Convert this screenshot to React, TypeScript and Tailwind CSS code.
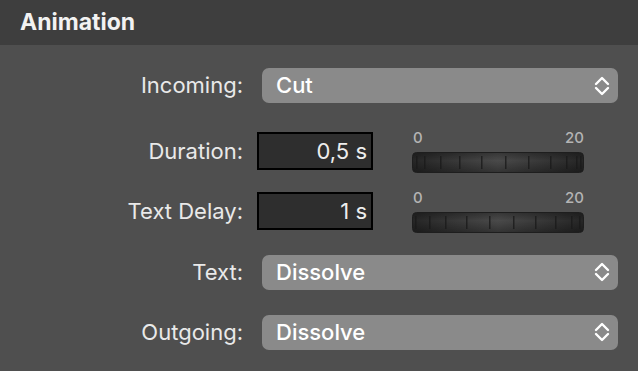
import type { ReactNode } from 'react'

const font = { fontFamily: 'Inter, "Liberation Sans", Arial, sans-serif' }

function Chevrons() {
  return (
    <svg width="16" height="20" viewBox="0 0 16 20" fill="none" stroke="white" strokeWidth="2.4" strokeLinecap="round" strokeLinejoin="round">
      <path d="M2 8 L8 2 L14 8" />
      <path d="M2 12 L8 18 L14 12" />
    </svg>
  )
}

function Popup({ value }: { value: string }) {
  return (
    <div className="ml-[19px] flex h-[35px] w-[356px] items-center justify-between rounded-[7px] bg-[#8a8a8a] pl-[14px] pr-[8px]">
      <span className="text-[22px] font-medium text-white">{value}</span>
      <Chevrons />
    </div>
  )
}

function Field({ value }: { value: string }) {
  return (
    <div className="ml-[14px] flex h-[38px] w-[116px] items-center justify-end border-2 border-black bg-[#2e2e2e] pr-[4px]">
      <span className="text-[22px] text-[#ededed]">{value}</span>
    </div>
  )
}

function Wheel({ ticks }: { ticks: number[] }) {
  return (
    <div className="ml-[39px] flex w-[172px] flex-col">
      <div className="flex h-[18px] justify-between pl-[1px] text-[15px] font-medium leading-[18px] text-[#b4b4b4]">
        <span>0</span>
        <span>20</span>
      </div>
      <svg className="mt-[5px]" width="172" height="21" viewBox="0 0 172 21">
        <defs>
          <linearGradient id="wheel" x1="0" x2="1" y1="0" y2="0">
            <stop offset="0" stopColor="#262626" />
            <stop offset="0.5" stopColor="#4a4a4a" />
            <stop offset="1" stopColor="#262626" />
          </linearGradient>
          <linearGradient id="shade" x1="0" x2="0" y1="0" y2="1">
            <stop offset="0" stopColor="#000" stopOpacity="0.25" />
            <stop offset="0.4" stopColor="#000" stopOpacity="0" />
            <stop offset="1" stopColor="#000" stopOpacity="0.3" />
          </linearGradient>
        </defs>
        <rect x="0.5" y="0.5" width="171" height="20" rx="4" fill="url(#wheel)" stroke="#1e1e1e" />
        <rect x="1" y="1" width="170" height="19" rx="4" fill="url(#shade)" />
        {ticks.map((t) => (
          <rect key={t} x={t} y="4" width="1.5" height="13" fill="#1a1a1a" opacity="0.8" />
        ))}
      </svg>
    </div>
  )
}

function Row({ label, mt, h, children }: { label: string; mt: string; h: string; children: ReactNode }) {
  return (
    <div className={`flex items-center ${mt} ${h}`}>
      <div className="w-[243px] text-right text-[22px] text-[#e9e9e9]">{label}</div>
      {children}
    </div>
  )
}

export default function App() {
  return (
    <div className="h-[371px] w-[638px] overflow-hidden bg-[#4f4f4f]" style={font}>
      <div className="flex h-[45px] items-center bg-[#3e3e3e] pl-[20px]">
        <h1 className="text-[23px] font-bold text-[#f2f2f2]">Animation</h1>
      </div>

      <Row label="Incoming:" mt="mt-[23px]" h="h-[35px]">
        <Popup value="Cut" />
      </Row>

      <Row label="Duration:" mt="mt-[25px]" h="h-[46px]">
        <Field value="0,5 s" />
        <Wheel ticks={[4, 12, 28, 47, 69, 93, 116, 138, 154, 164, 168]} />
      </Row>

      <Row label="Text Delay:" mt="mt-[14px]" h="h-[46px]">
        <Field value="1 s" />
        <Wheel ticks={[3, 17, 33, 54, 77, 101, 123, 143, 159, 167]} />
      </Row>

      <Row label="Text:" mt="mt-[20px]" h="h-[36px]">
        <Popup value="Dissolve" />
      </Row>

      <Row label="Outgoing:" mt="mt-[24px]" h="h-[36px]">
        <Popup value="Dissolve" />
      </Row>
    </div>
  )
}
